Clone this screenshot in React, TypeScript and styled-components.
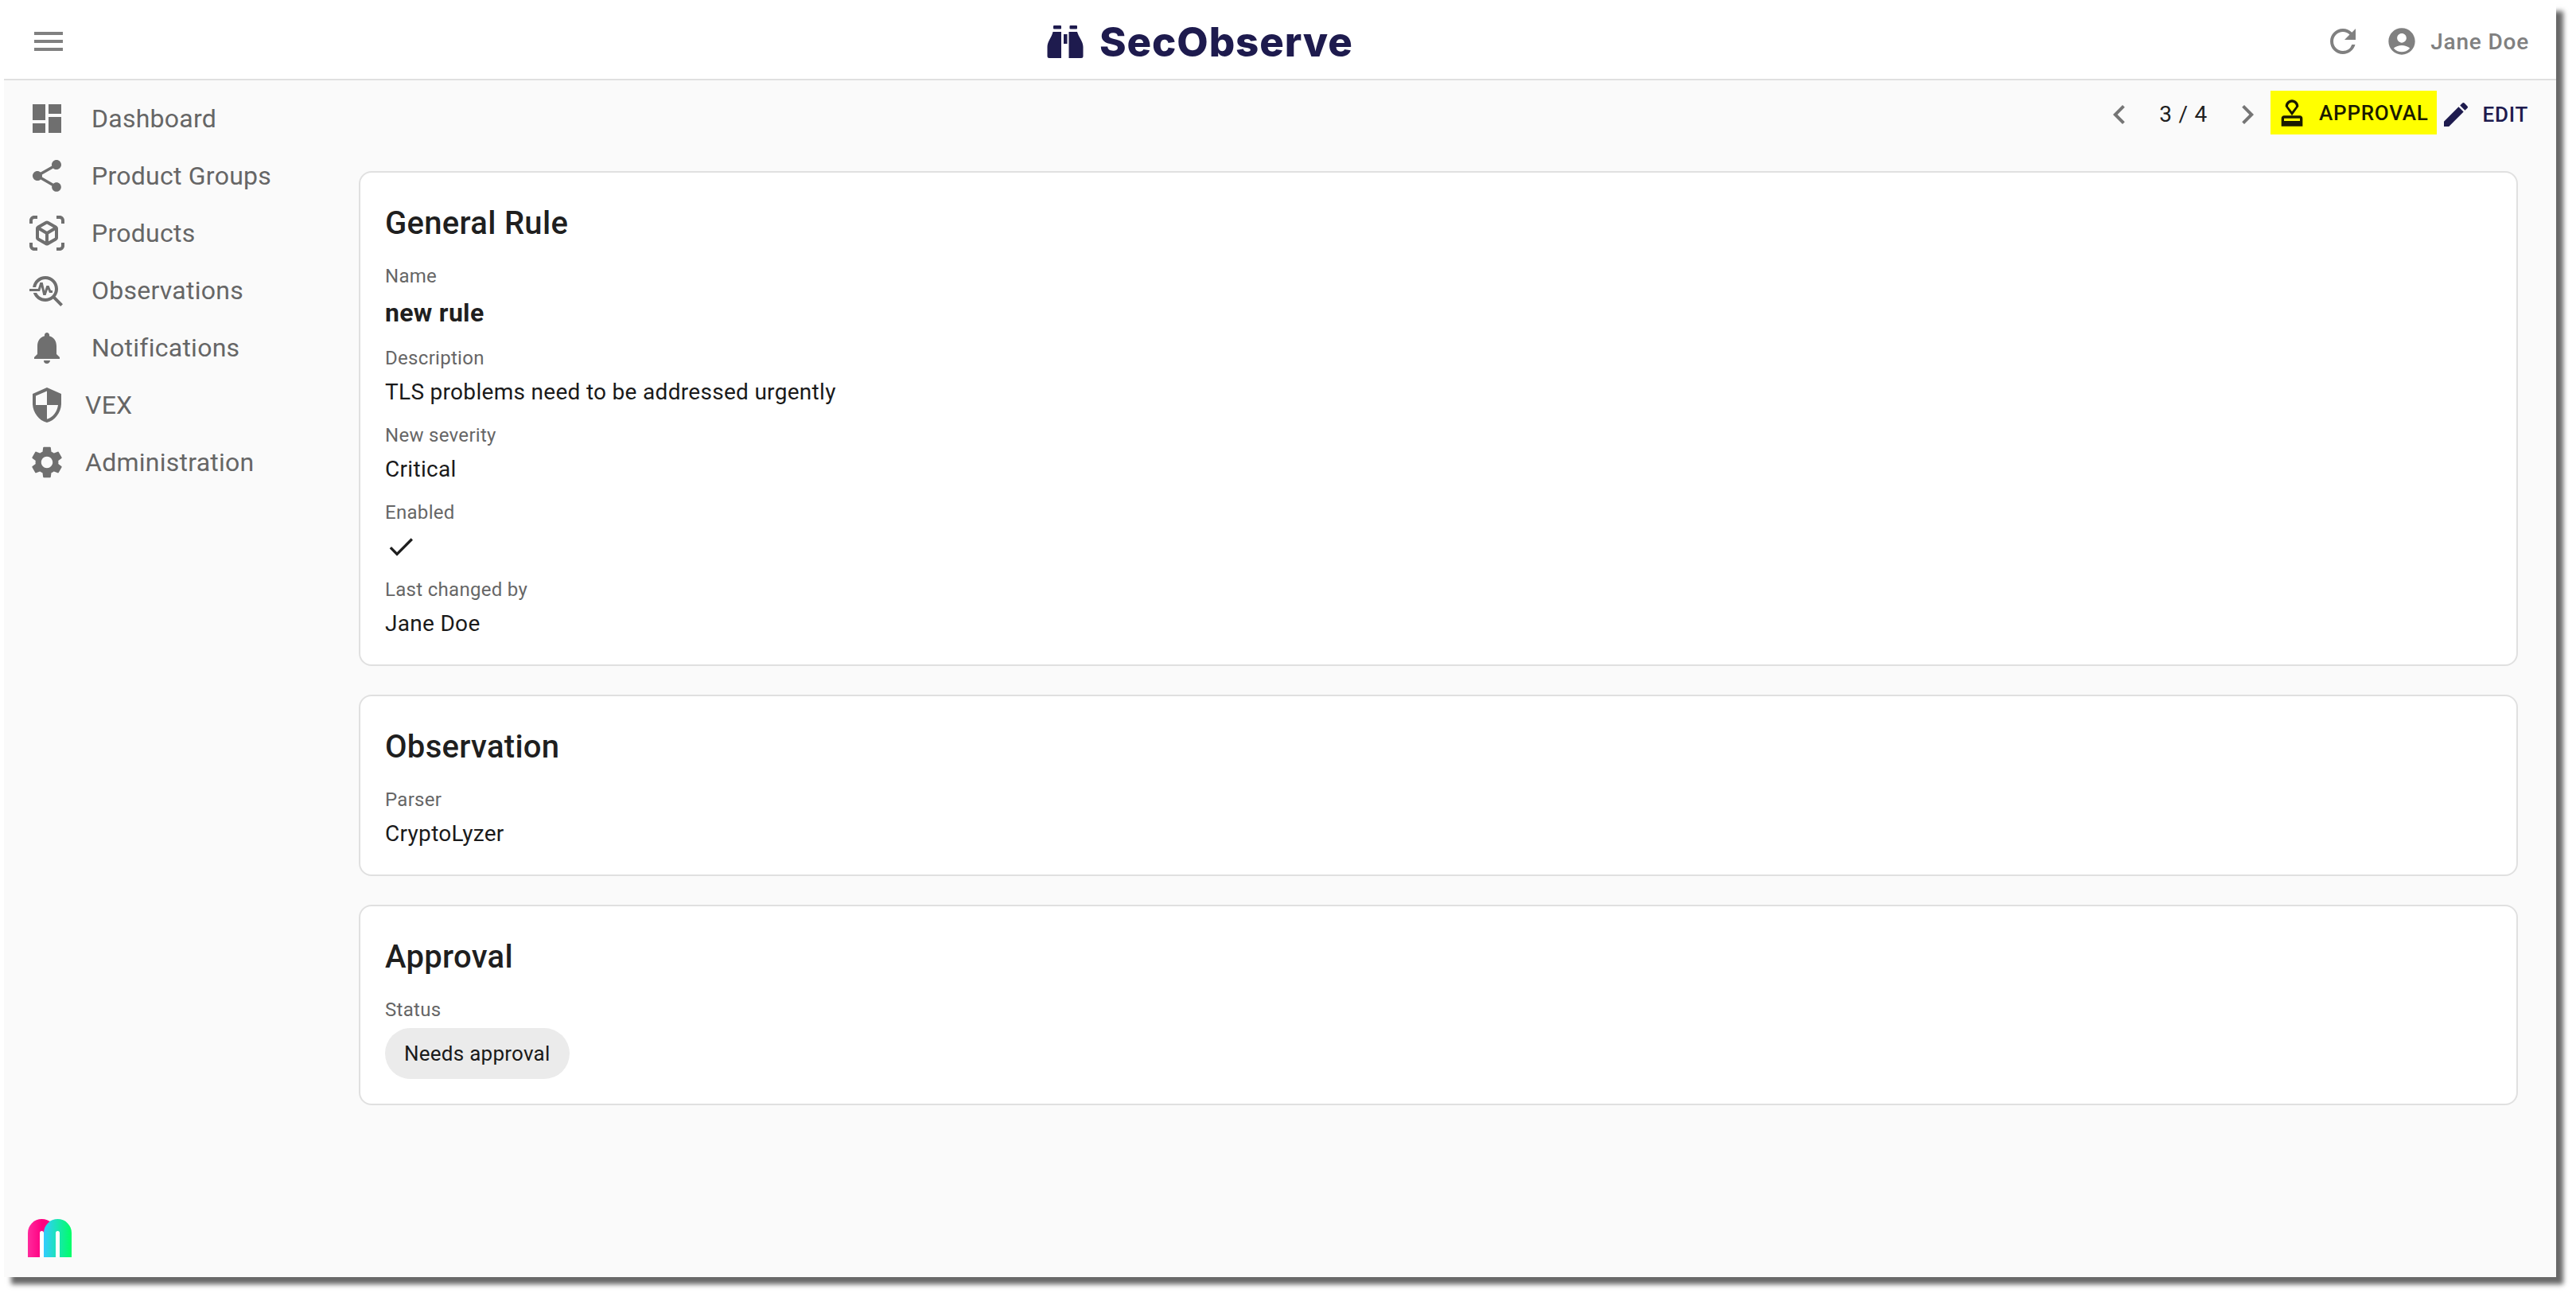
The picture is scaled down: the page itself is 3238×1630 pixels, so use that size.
import React from "react";
import styled, { createGlobalStyle } from "styled-components";
import {
  MdMenu, MdRefresh, MdAccountCircle, MdDashboard, MdShare, MdOutlineViewInAr, MdTroubleshoot,
  MdNotifications, MdSecurity, MdSettings, MdChevronLeft, MdChevronRight, MdApproval, MdEdit, MdCheck,
} from "react-icons/md";

const GlobalStyle = createGlobalStyle`
  html, body { margin: 0; padding: 0; background: #fff; }
  body { font-family: Roboto, "Liberation Sans", sans-serif; }
`;

const Page = styled.div`
  width: 3238px;
  height: 1630px;
  padding: 5px 0 0 5px;
  box-sizing: border-box;
  overflow: hidden;
`;

const Frame = styled.div`
  width: 3208px;
  height: 1600px;
  background: #fafafa;
  box-shadow: 9px 9px 6px #686868;
  display: flex;
  flex-direction: column;
`;

const Header = styled.header`
  height: 94px;
  flex: none;
  background: #fff;
  border-bottom: 2px solid #e0e0e0;
  display: grid;
  grid-template-columns: 1311px auto 1fr;
  align-items: center;
  color: #808080;
`;

const HeaderLeft = styled.div`
  display: flex;
  padding-left: 32px;
  font-size: 48px;
  line-height: 0;
`;

const Logo = styled.div`
  display: flex;
  align-items: center;
  gap: 20px;
  color: #1e1b4e;
`;

const LogoText = styled.span`
  font-family: Inter, sans-serif;
  font-weight: 800;
  font-size: 51px;
  line-height: 1;
  letter-spacing: 0.9px;
`;

const HeaderRight = styled.div`
  display: flex;
  justify-content: flex-end;
  align-items: center;
  padding-right: 34px;
`;

const UserName = styled.span`
  font-size: 28px;
  font-weight: 500;
  letter-spacing: 0.8px;
  margin-left: 16px;
`;

const AccountIcon = styled(MdAccountCircle)`
  font-size: 40px;
  margin-left: 30px;
`;

const Body = styled.div`
  flex: 1;
  display: flex;
  min-height: 0;
`;

const Sidebar = styled.nav`
  width: 446px;
  flex: none;
  display: flex;
  flex-direction: column;
  padding: 12px 0 25px 30px;
  box-sizing: border-box;
`;

const NavItem = styled.div<{ $tight?: boolean }>`
  height: 72px;
  display: flex;
  align-items: center;
  color: #666;
  font-size: 32px;
  letter-spacing: 0.25px;
  gap: ${(p) => (p.$tight ? 24 : 32)}px;
  svg { font-size: 48px; color: #6f6f6f; flex: none; }
`;

const BrandMark = styled.svg`
  margin-top: auto;
  width: 55px;
  height: 48px;
`;

const Content = styled.main`
  flex: 1;
  min-width: 0;
  display: flex;
  flex-direction: column;
`;

const Toolbar = styled.div`
  height: 114px;
  flex: none;
  box-sizing: border-box;
  padding: 13px 25px 0 0;
  display: flex;
  justify-content: flex-end;
  align-items: flex-start;
`;

const Pager = styled.div`
  display: flex;
  align-items: center;
  height: 55px;
  margin: 2px 5px 0 0;
  font-size: 28px;
  letter-spacing: 0.8px;
  color: #1f1f1f;
  svg { font-size: 48px; color: #757575; }
`;

const PagerCount = styled.span`
  margin: 0 26px;
`;

const ActionButton = styled.div<{ $highlight?: boolean }>`
  height: 55px;
  display: flex;
  align-items: center;
  gap: 14px;
  margin-top: ${(p) => (p.$highlight ? 0 : 2)}px;
  padding: 0 10px 0 ${(p) => (p.$highlight ? 7 : 4)}px;
  font-size: 26px;
  font-weight: 500;
  letter-spacing: 0.74px;
  color: ${(p) => (p.$highlight ? "#1a1a00" : "#1e1b4e")};
  background: ${(p) => (p.$highlight ? "#ffff00" : "transparent")};
  svg { font-size: 40px; }
`;

const Cards = styled.div`
  display: flex;
  flex-direction: column;
  gap: 36px;
  padding-right: 48px;
`;

const Card = styled.section`
  background: #fff;
  border: 2px solid #e0e0e0;
  border-radius: 16px;
  padding: 32px 31px 31px;
  box-sizing: border-box;
`;

const CardTitle = styled.h2`
  margin: 0 0 14px;
  font-size: 40px;
  line-height: 64px;
  font-weight: 500;
  letter-spacing: 0.3px;
  color: #1f1f1f;
`;

const Field = styled.div`
  margin-bottom: 14px;
  &:last-child { margin-bottom: 0; }
`;

const Label = styled.div`
  font-size: 24px;
  line-height: 40px;
  letter-spacing: 0.3px;
  margin-bottom: 3px;
  color: #666;
`;

const Value = styled.div<{ $bold?: boolean }>`
  font-size: ${(p) => (p.$bold ? 32 : 28)}px;
  line-height: ${(p) => (p.$bold ? 46 : 40)}px;
  letter-spacing: 0.3px;
  color: ${(p) => (p.$bold ? "#1f1f1f" : "#1a1a1a")};
  font-weight: ${(p) => (p.$bold ? 700 : 400)};
`;

const CheckIcon = styled(MdCheck)`
  display: block;
  font-size: 40px;
  color: #1f1f1f;
`;

const Chip = styled.span`
  display: inline-flex;
  align-items: center;
  height: 64px;
  padding: 0 24px;
  border-radius: 32px;
  background: #ebebeb;
  font-size: 26px;
  letter-spacing: 0.25px;
  color: #1a1a1a;
`;

const navItems = [
  { label: "Dashboard", icon: <MdDashboard /> },
  { label: "Product Groups", icon: <MdShare /> },
  { label: "Products", icon: <MdOutlineViewInAr /> },
  { label: "Observations", icon: <MdTroubleshoot /> },
  { label: "Notifications", icon: <MdNotifications /> },
  { label: "VEX", icon: <MdSecurity />, tight: true },
  { label: "Administration", icon: <MdSettings />, tight: true },
];

const Binoculars = () => (
  <svg width="46" height="41" viewBox="0 0 46 41" fill="currentColor">
    <rect x="8" y="0" width="10" height="4.5" rx="1" />
    <rect x="28.5" y="0" width="9.5" height="4.5" rx="1" />
    <path d="M7.5 8H18V41H3a2.5 2.5 0 0 1-2.5-2.5V27C.5 20 6 15 7.5 8z" />
    <path d="M38 8H27.5V41H43a2.5 2.5 0 0 0 2.5-2.5V27C45.500 20 40 15 38 8z" />
    <rect x="21" y="11" width="4.500" height="12" />
  </svg>
);

const Brand = () => (
  <BrandMark viewBox="0 0 55 48">
    <defs>
      <linearGradient id="pink" x1="0" y1="0" x2="1" y2="0">
        <stop offset="0" stopColor="#ff2a9d" />
        <stop offset="0.5" stopColor="#ff0080" />
      </linearGradient>
      <linearGradient id="mint" x1="0" y1="0" x2="1" y2="0">
        <stop offset="0" stopColor="#33ccff" />
        <stop offset="1" stopColor="#00ff66" />
      </linearGradient>
    </defs>
    <path d="M0 48V17.500a17.500 17.500 0 0 1 35 0V48z" fill="url(#pink)" />
    <path d="M15 48V17.500a2.500 2.500 0 0 1 5 0V48z" fill="#fff" />
    <path d="M20 48V17.500a17.500 17.500 0 0 1 35 0V48z" fill="url(#mint)" />
    <path d="M35 48V17.500a2.500 2.500 0 0 1 5 0V48z" fill="#fff" />
  </BrandMark>
);

export default function App() {
  return (
    <Page>
      <GlobalStyle />
      <Frame>
        <Header>
          <HeaderLeft><MdMenu /></HeaderLeft>
          <Logo>
            <Binoculars />
            <LogoText>SecObserve</LogoText>
          </Logo>
          <HeaderRight>
            <MdRefresh size={48} />
            <AccountIcon />
            <UserName>Jane Doe</UserName>
          </HeaderRight>
        </Header>
        <Body>
          <Sidebar>
            {navItems.map((item) => (
              <NavItem key={item.label} $tight={item.tight}>
                {item.icon}
                <span>{item.label}</span>
              </NavItem>
            ))}
            <Brand />
          </Sidebar>
          <Content>
            <Toolbar>
              <Pager>
                <MdChevronLeft />
                <PagerCount>3 / 4</PagerCount>
                <MdChevronRight />
              </Pager>
              <ActionButton $highlight><MdApproval />APPROVAL</ActionButton>
              <ActionButton><MdEdit />EDIT</ActionButton>
            </Toolbar>
            <Cards>
              <Card>
                <CardTitle>General Rule</CardTitle>
                <Field><Label>Name</Label><Value $bold>new rule</Value></Field>
                <Field><Label>Description</Label><Value>TLS problems need to be addressed urgently</Value></Field>
                <Field><Label>New severity</Label><Value>Critical</Value></Field>
                <Field><Label>Enabled</Label><CheckIcon /></Field>
                <Field><Label>Last changed by</Label><Value>Jane Doe</Value></Field>
              </Card>
              <Card>
                <CardTitle>Observation</CardTitle>
                <Field><Label>Parser</Label><Value>CryptoLyzer</Value></Field>
              </Card>
              <Card>
                <CardTitle>Approval</CardTitle>
                <Field><Label>Status</Label><Chip>Needs approval</Chip></Field>
              </Card>
            </Cards>
          </Content>
        </Body>
      </Frame>
    </Page>
  );
}
